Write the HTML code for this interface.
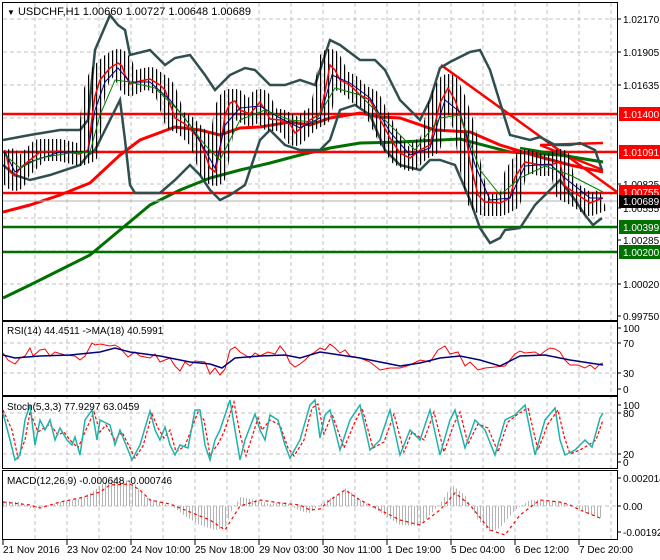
<!DOCTYPE html>
<html><head><meta charset="utf-8"><style>
html,body{margin:0;padding:0;background:#fff;}
svg{display:block;font-family:"Liberation Sans",sans-serif;}
</style></head><body>
<svg width="660" height="560" viewBox="0 0 660 560" xmlns="http://www.w3.org/2000/svg">
<defs>
<pattern id="bars" width="4" height="10" patternUnits="userSpaceOnUse"><rect x="0" y="0" width="1.2" height="10" fill="#000"/></pattern>
<pattern id="hist" width="3" height="10" patternUnits="userSpaceOnUse"><rect x="0" y="0" width="1" height="10" fill="#b4b4b4"/></pattern>
<clipPath id="cm"><rect x="3" y="3" width="614" height="317"/></clipPath>
</defs>
<rect width="660" height="560" fill="#fff"/>
<g stroke="#c0c0c0" stroke-dasharray="4,3" stroke-width="1">
<path d="M35 3V540M67 3V540M99 3V540M131 3V540M163 3V540M195 3V540M227 3V540M259 3V540M291 3V540M323 3V540M355 3V540M387 3V540M419 3V540M451 3V540M483 3V540M515 3V540M547 3V540M579 3V540M611 3V540"/>
<path d="M3 19H617M3 52H617M3 85H617M3 118H617M3 151H617M3 184H617M3 218H617M3 251H617M3 284H617"/>
<path d="M3 343H617M3 373H617M3 413H617M3 454H617M3 506H617"/>
</g>
<g clip-path="url(#cm)">
<polyline fill="none" stroke="#007000" stroke-width="3" points="3,298 30,285 60,270 90,255 120,230 150,205 180,190 210,178 240,170 270,163 300,155 330,148 360,143 400,142 440,140 460,139 510,152 560,155 603,162"/>
<polyline fill="none" stroke="#ff0000" stroke-width="3" points="3,212 30,205 60,195 90,183 120,155 140,140 175,127 200,130 220,135 240,128 260,127 290,122 310,125 330,118 360,113 380,117 400,118 435,130 470,132 500,145 540,157 570,165 603,172"/>
<path d="M3 114H617M3 152H617M3 193H617" stroke="#ff0000" stroke-width="2.5"/>
<path d="M3 227H617M3 252H617" stroke="#007000" stroke-width="2.5"/>
<path d="M3 201H617" stroke="#b0b0b0" stroke-width="1"/>
<path d="M441 65L617 192M540 145L603 170M540 145L603 143" stroke="#ff0000" stroke-width="2.5"/>
<path d="M520 148L603 162" stroke="#007000" stroke-width="2.5"/>
<g fill="none" stroke="#2f4f4f" stroke-width="2.5">
<polyline points="3,140 30,135 60,130 80,130 88,120 95,50 110,15 118,25 125,30 130,55 150,50 160,60 165,65 175,58 190,55 205,75 215,90 230,75 245,68 255,70 270,85 285,85 300,80 315,85 330,40 340,45 360,60 375,60 385,70 400,100 410,110 420,120 430,100 440,68 450,62 470,52 480,50 490,70 510,135 530,140 540,137 555,145 570,145 580,143 595,150 602,170"/>
<polyline points="3,165 15,175 30,180 50,175 80,165 88,155 95,150 105,130 115,110 120,100 125,140 130,185 135,193 160,193 175,180 190,165 200,175 210,190 220,200 230,195 245,185 260,140 270,130 285,145 300,150 320,150 330,140 340,110 355,105 370,115 385,150 400,165 420,170 430,160 440,160 455,165 470,200 480,228 490,243 500,238 505,230 520,228 535,205 545,195 560,180 575,200 585,215 593,225 602,218"/>
</g>
<polyline fill="none" stroke="url(#bars)" stroke-width="22" stroke-linejoin="round" points="5,150 10,175 15,180 20,170 30,160 40,150 60,150 80,155 88,152 92,110 95,90 100,75 110,65 118,60 122,65 125,75 130,85 140,80 150,78 160,85 165,90 170,105 175,120 185,125 190,130 200,140 205,155 210,170 215,175 220,150 225,110 230,100 235,100 240,110 250,115 260,100 265,110 270,120 280,120 290,125 295,135 300,130 310,120 320,115 325,90 330,60 335,70 340,80 350,85 360,95 370,100 380,120 390,140 400,155 410,160 420,150 430,145 440,100 448,85 455,100 465,130 470,165 478,200 485,205 500,205 510,200 515,175 525,160 540,165 550,165 560,160 565,190 575,195 590,205 603,200"/>
<polyline fill="none" stroke="#ff0000" stroke-width="1.5" points="5,150 10,172 15,176 20,168 30,160 40,152 60,151 80,154 88,150 92,118 95,96 100,80 110,68 118,63 122,66 125,75 130,84 140,81 150,79 160,85 165,90 170,104 175,118 185,124 190,129 200,140 205,154 210,168 215,172 220,150 225,115 230,103 235,101 240,110 250,114 260,102 265,110 270,119 280,120 290,124 295,133 300,129 310,120 320,114 325,92 330,65 335,70 340,80 350,85 360,95 370,100 380,119 390,138 400,153 410,158 420,150 430,145 440,103 448,88 455,100 465,130 470,162 478,195 485,202 500,203 510,198 515,177 525,162 540,165 550,165 560,162 565,186 575,193 590,203 603,198"/>
<polyline fill="none" stroke="#000080" stroke-width="1" points="5,152 15,172 30,162 60,152 88,152 95,110 105,82 118,68 130,82 150,82 170,100 190,125 205,150 215,168 225,125 240,108 260,106 280,118 300,128 320,118 332,75 350,83 370,98 390,132 410,155 430,148 445,100 460,112 475,165 490,200 510,198 525,166 550,164 565,178 590,198 603,198"/>
<polyline fill="none" stroke="#008000" stroke-width="1" points="5,155 20,168 40,158 70,153 90,152 100,115 115,80 130,82 155,88 180,112 205,145 220,160 240,120 265,110 290,120 315,122 335,88 360,95 390,125 415,150 440,118 460,115 480,170 500,195 520,178 545,166 570,175 603,192"/>
</g>
<rect x="2.5" y="2.5" width="615" height="318" fill="none" stroke="#000"/>
<text x="7" y="15" font-size="11" fill="#000"><tspan font-size="8">▼</tspan> USDCHF,H1  1.00660 1.00727 1.00648 1.00689</text>
<rect x="2.5" y="321.5" width="615" height="74" fill="none" stroke="#000"/>
<polyline fill="none" stroke="#ff0000" stroke-width="1" points="3,353 8,360 15,364 20,358 25,356 30,348 33,356 40,350 45,349 50,356 55,352 65,355 75,356 80,360 85,356 92,343 95,345 100,344 110,346 115,345 120,348 128,357 135,352 140,356 150,358 155,354 160,362 170,358 175,366 180,371 185,362 190,366 195,361 205,362 210,374 215,368 220,375 225,369 230,350 235,347 240,352 245,355 250,358 255,353 260,356 268,352 275,354 280,346 285,352 290,363 295,367 300,364 305,360 310,355 315,352 320,348 325,350 330,344 335,348 340,353 345,350 350,356 360,358 370,362 380,370 390,368 400,368 410,365 420,360 430,362 438,350 445,346 450,354 458,352 465,366 470,362 478,370 485,368 495,367 505,366 515,354 520,351 525,353 535,352 540,355 545,351 550,348 555,349 560,352 565,360 570,365 578,365 585,368 590,365 595,369 600,364 603,363"/>
<polyline fill="none" stroke="#000080" stroke-width="1.5" points="3,355 15,358 40,356 70,355 100,352 115,348 130,352 160,356 190,362 210,364 222,368 235,358 260,356 285,355 300,358 320,352 340,355 360,358 380,362 400,366 420,363 440,358 460,356 480,360 500,366 520,356 545,355 570,360 603,365"/>
<text x="7" y="334" font-size="10">RSI(14) 44.4511   -&gt;MA(18) 40.5991</text>
<rect x="2.5" y="396.5" width="615" height="72" fill="none" stroke="#000"/>
<polyline fill="none" stroke="#ff0000" stroke-width="1.2" stroke-dasharray="3,2" points="3,410 12,430 18,458 25,440 30,412 38,432 44,428 50,424 58,435 64,432 70,440 78,448 85,432 94,412 100,432 106,425 115,440 122,432 135,458 143,446 152,414 158,428 164,438 170,430 176,452 185,446 198,412 204,420 210,455 218,444 224,432 234,402 240,434 246,456 258,418 262,430 270,420 280,425 288,448 294,456 304,440 312,408 318,404 324,434 332,414 344,448 354,424 362,408 373,448 384,442 394,414 404,452 412,432 424,440 434,412 444,452 454,424 460,412 468,444 478,424 488,428 498,452 508,422 518,414 528,408 538,450 548,424 558,410 564,436 570,454 580,450 590,444 596,440 603,420"/>
<polyline fill="none" stroke="#20b2aa" stroke-width="1.5" points="3,413 10,440 15,460 20,455 25,420 30,405 35,445 40,420 45,430 50,420 55,440 60,428 67,440 72,445 75,437 80,455 85,420 92,410 97,440 100,420 110,425 115,445 120,430 132,460 140,445 150,411 155,430 160,440 165,427 170,445 175,455 180,445 188,448 195,410 200,410 205,445 210,460 215,440 220,430 230,400 235,430 240,460 245,440 255,414 260,430 265,440 270,415 278,420 285,445 290,458 300,440 310,405 315,400 320,438 325,415 330,410 340,450 350,420 360,405 370,450 380,440 390,410 400,455 410,430 420,440 430,410 440,455 450,420 455,410 465,448 475,420 485,430 495,455 505,420 515,415 525,405 535,455 545,420 555,408 560,440 565,455 575,450 585,440 592,447 600,418 603,413"/>
<text x="7" y="410" font-size="10">Stoch(5,3,3) 77.9297 63.0459</text>
<rect x="2.5" y="470.5" width="615" height="69" fill="none" stroke="#000"/>
<polygon fill="url(#hist)" points="3,506 3,501 20,502 30,508 40,508 50,505 60,502 80,499 95,490 105,482 115,478 125,480 135,484 145,497 160,502 175,508 185,516 200,525 215,530 225,528 232,510 240,497 255,500 270,504 285,502 300,511 310,513 318,506 330,498 340,494 345,488 352,493 360,500 380,512 400,525 420,526 440,504 452,485 465,495 478,520 490,532 500,528 515,510 530,500 545,500 560,502 575,506 585,513 600,518 603,517 603,506"/>
<polyline fill="none" stroke="#ff0000" stroke-width="1.2" stroke-dasharray="3,3" points="3,502 30,505 40,508 60,502 80,498 100,492 110,485 130,484 140,490 150,500 170,504 190,512 210,520 225,530 240,506 260,500 280,503 300,505 310,510 320,509 330,500 345,490 360,500 380,510 400,520 420,525 440,510 455,493 470,505 490,530 505,535 520,515 540,500 560,502 570,505 580,510 600,518"/>
<text x="7" y="484" font-size="10">MACD(12,26,9) -0.000648 -0.000746</text>
<g font-size="10" fill="#000">
<path d="M617 19h4M617 52h4M617 85h4M617 184h4M617 208h4M617 240h4M617 284h4M617 316h4M617 328h4M617 343h4M617 373h4M617 389h4M617 405h4M617 413h4M617 454h4M617 462h4M617 478h4M617 506h4M617 532h4" stroke="#000"/>
<text x="623" y="23">1.02170</text><text x="623" y="56">1.01905</text><text x="623" y="89">1.01635</text>
<text x="623" y="188">1.00825</text><text x="623" y="212">1.00555</text><text x="623" y="244">1.00285</text>
<text x="623" y="288">1.00020</text><text x="623" y="320">0.99750</text>
<rect x="619" y="107" width="41" height="14" fill="#ff0000"/><text x="623" y="118" fill="#fff">1.01400</text>
<rect x="619" y="145" width="41" height="14" fill="#ff0000"/><text x="623" y="156" fill="#fff">1.01091</text>
<rect x="619" y="185" width="41" height="14" fill="#ff0000"/><text x="623" y="196" fill="#fff">1.00755</text>
<rect x="619" y="195" width="41" height="13" fill="#000"/><text x="623" y="205" fill="#fff">1.00689</text>
<rect x="619" y="220" width="41" height="14" fill="#007000"/><text x="623" y="231" fill="#fff">1.00399</text>
<rect x="619" y="245" width="41" height="14" fill="#007000"/><text x="623" y="256" fill="#fff">1.00200</text>
<text x="623" y="332">100</text><text x="623" y="347">70</text><text x="623" y="377">30</text><text x="623" y="393">0</text>
<text x="623" y="409">100</text><text x="623" y="417">80</text><text x="623" y="458">20</text><text x="623" y="466">0</text>
<text x="623" y="482">0.002014</text><text x="623" y="510">0.00</text><text x="623" y="536">-0.001923</text>
</g>
<g font-size="10">
<path d="M3 540v5M67 540v5M131 540v5M195 540v5M259 540v5M323 540v5M387 540v5M451 540v5M515 540v5M579 540v5" stroke="#000"/>
<text x="3" y="553">21 Nov 2016</text><text x="67" y="553">23 Nov 02:00</text><text x="131" y="553">24 Nov 10:00</text>
<text x="195" y="553">25 Nov 18:00</text><text x="259" y="553">29 Nov 03:00</text><text x="323" y="553">30 Nov 11:00</text>
<text x="387" y="553">1 Dec 19:00</text><text x="451" y="553">5 Dec 04:00</text><text x="515" y="553">6 Dec 12:00</text>
<text x="579" y="553">7 Dec 20:00</text>
</g>
</svg>
</body></html>
